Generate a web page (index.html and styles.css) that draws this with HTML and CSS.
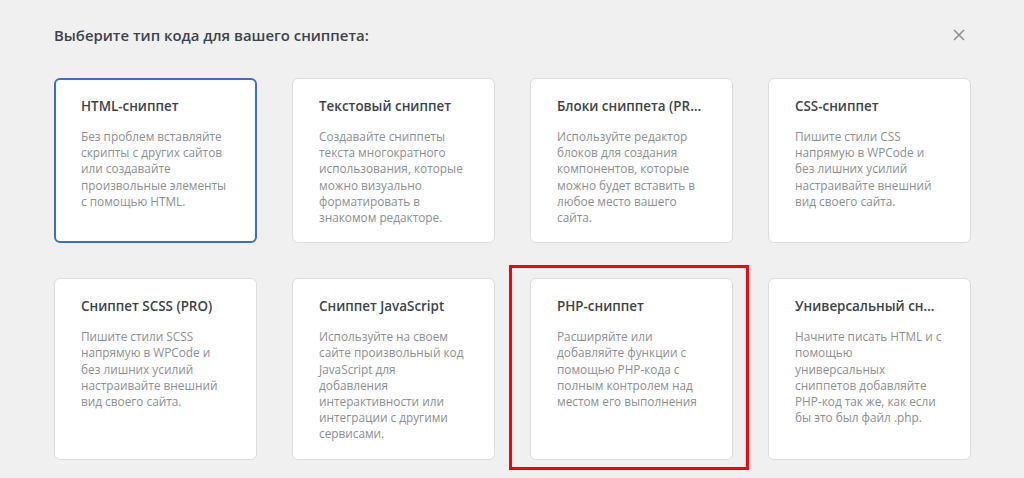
FILE: index.html
```html
<!DOCTYPE html>
<html lang="ru">
<head>
  <meta charset="UTF-8">
  <meta name="viewport" content="width=device-width, initial-scale=1.0">
  <title>Добавить сниппет</title>
  <link rel="stylesheet" href="styles.css">
</head>
<body>
  <div class="modal">
    <!-- Заголовок окна -->
    <div class="modal-header">
      <h2>Выберите тип кода для вашего сниппета:</h2>
      <button class="close-btn" aria-label="Закрыть">
        <svg width="12" height="12" viewBox="0 0 12 12">
          <path d="M1 1 L11 11 M11 1 L1 11" stroke="#8c8f94" stroke-width="1.6" fill="none"/>
        </svg>
      </button>
    </div>

    <!-- Типы сниппетов -->
    <div class="type-grid">
      <div class="type-card selected">
        <h3>HTML-сниппет</h3>
        <p>Без проблем вставляйте скрипты с других сайтов или создавайте произвольные элементы с помощью HTML.</p>
      </div>
      <div class="type-card">
        <h3>Текстовый сниппет</h3>
        <p>Создавайте сниппеты текста многократного использования, которые можно визуально форматировать в знакомом редакторе.</p>
      </div>
      <div class="type-card">
        <h3>Блоки сниппета (PRO)</h3>
        <p>Используйте редактор блоков для создания компонентов, которые можно будет вставить в любое место вашего сайта.</p>
      </div>
      <div class="type-card">
        <h3>CSS-сниппет</h3>
        <p>Пишите стили CSS напрямую в WPCode и без лишних усилий настраивайте внешний вид своего сайта.</p>
      </div>
      <div class="type-card">
        <h3>Сниппет SCSS (PRO)</h3>
        <p>Пишите стили SCSS напрямую в WPCode и без лишних усилий настраивайте внешний вид своего сайта.</p>
      </div>
      <div class="type-card">
        <h3>Сниппет JavaScript</h3>
        <p>Используйте на своем сайте произвольный код JavaScript для добавления интерактивности или интеграции с другими сервисами.</p>
      </div>
      <div class="type-card marked">
        <h3>PHP-сниппет</h3>
        <p>Расширяйте или добавляйте функции с помощью PHP-кода с полным контролем над местом его выполнения</p>
      </div>
      <div class="type-card">
        <h3>Универсальный сниппет</h3>
        <p>Начните писать HTML и с помощью универсальных сниппетов добавляйте PHP-код так же, как если бы это был файл .php.</p>
      </div>
    </div>
  </div>
</body>
</html>
```

FILE: styles.css
```css
/* общие стили */
body {
  margin: 0;
  background-color: #f0f0f1;
  font-family: "Open Sans", "Noto Sans", sans-serif;
  color: #3c434a;
}

.modal {
  width: 917px;
  margin-left: 54px;
  padding: 23px 0 19px;
}

.modal-header {
  display: flex;
  justify-content: space-between;
  align-items: center;
  height: 24px;
  margin-bottom: 31px;
}

.modal-header h2 {
  margin: 0;
  font-size: 14.9px;
  font-weight: 600;
  color: #3c434a;
}

.close-btn {
  background: none;
  border: none;
  padding: 0;
  margin-right: 6px;
  width: 12px;
  height: 12px;
  cursor: pointer;
  display: flex;
}

/* сетка карточек */
.type-grid {
  display: grid;
  grid-template-columns: repeat(4, 203px);
  gap: 35px;
}

.type-card {
  position: relative;
  background: #fff;
  border: 1px solid #dcdcde;
  border-radius: 6px;
  padding: 17px 28px 17px 26px;
}

.type-card.selected {
  border: 2px solid #3a6fc4;
  padding: 16px 27px 16px 25px;
}

.type-card h3 {
  margin: 0 -0.6px 12px 0;
  font-size: 13.4px;
  line-height: 20px;
  font-weight: 600;
  color: #3c434a;
  white-space: nowrap;
  overflow: hidden;
  text-overflow: ellipsis;
}

.type-card p {
  margin: 0;
  font-size: 11.8px;
  line-height: 16.2px;
  color: #8c8f94;
}

/* красная рамка выделения */
.type-card.marked::after {
  content: "";
  position: absolute;
  top: -14px;
  left: -22px;
  right: -17px;
  bottom: -11px;
  border: 3px solid #f00;
  pointer-events: none;
}
```
